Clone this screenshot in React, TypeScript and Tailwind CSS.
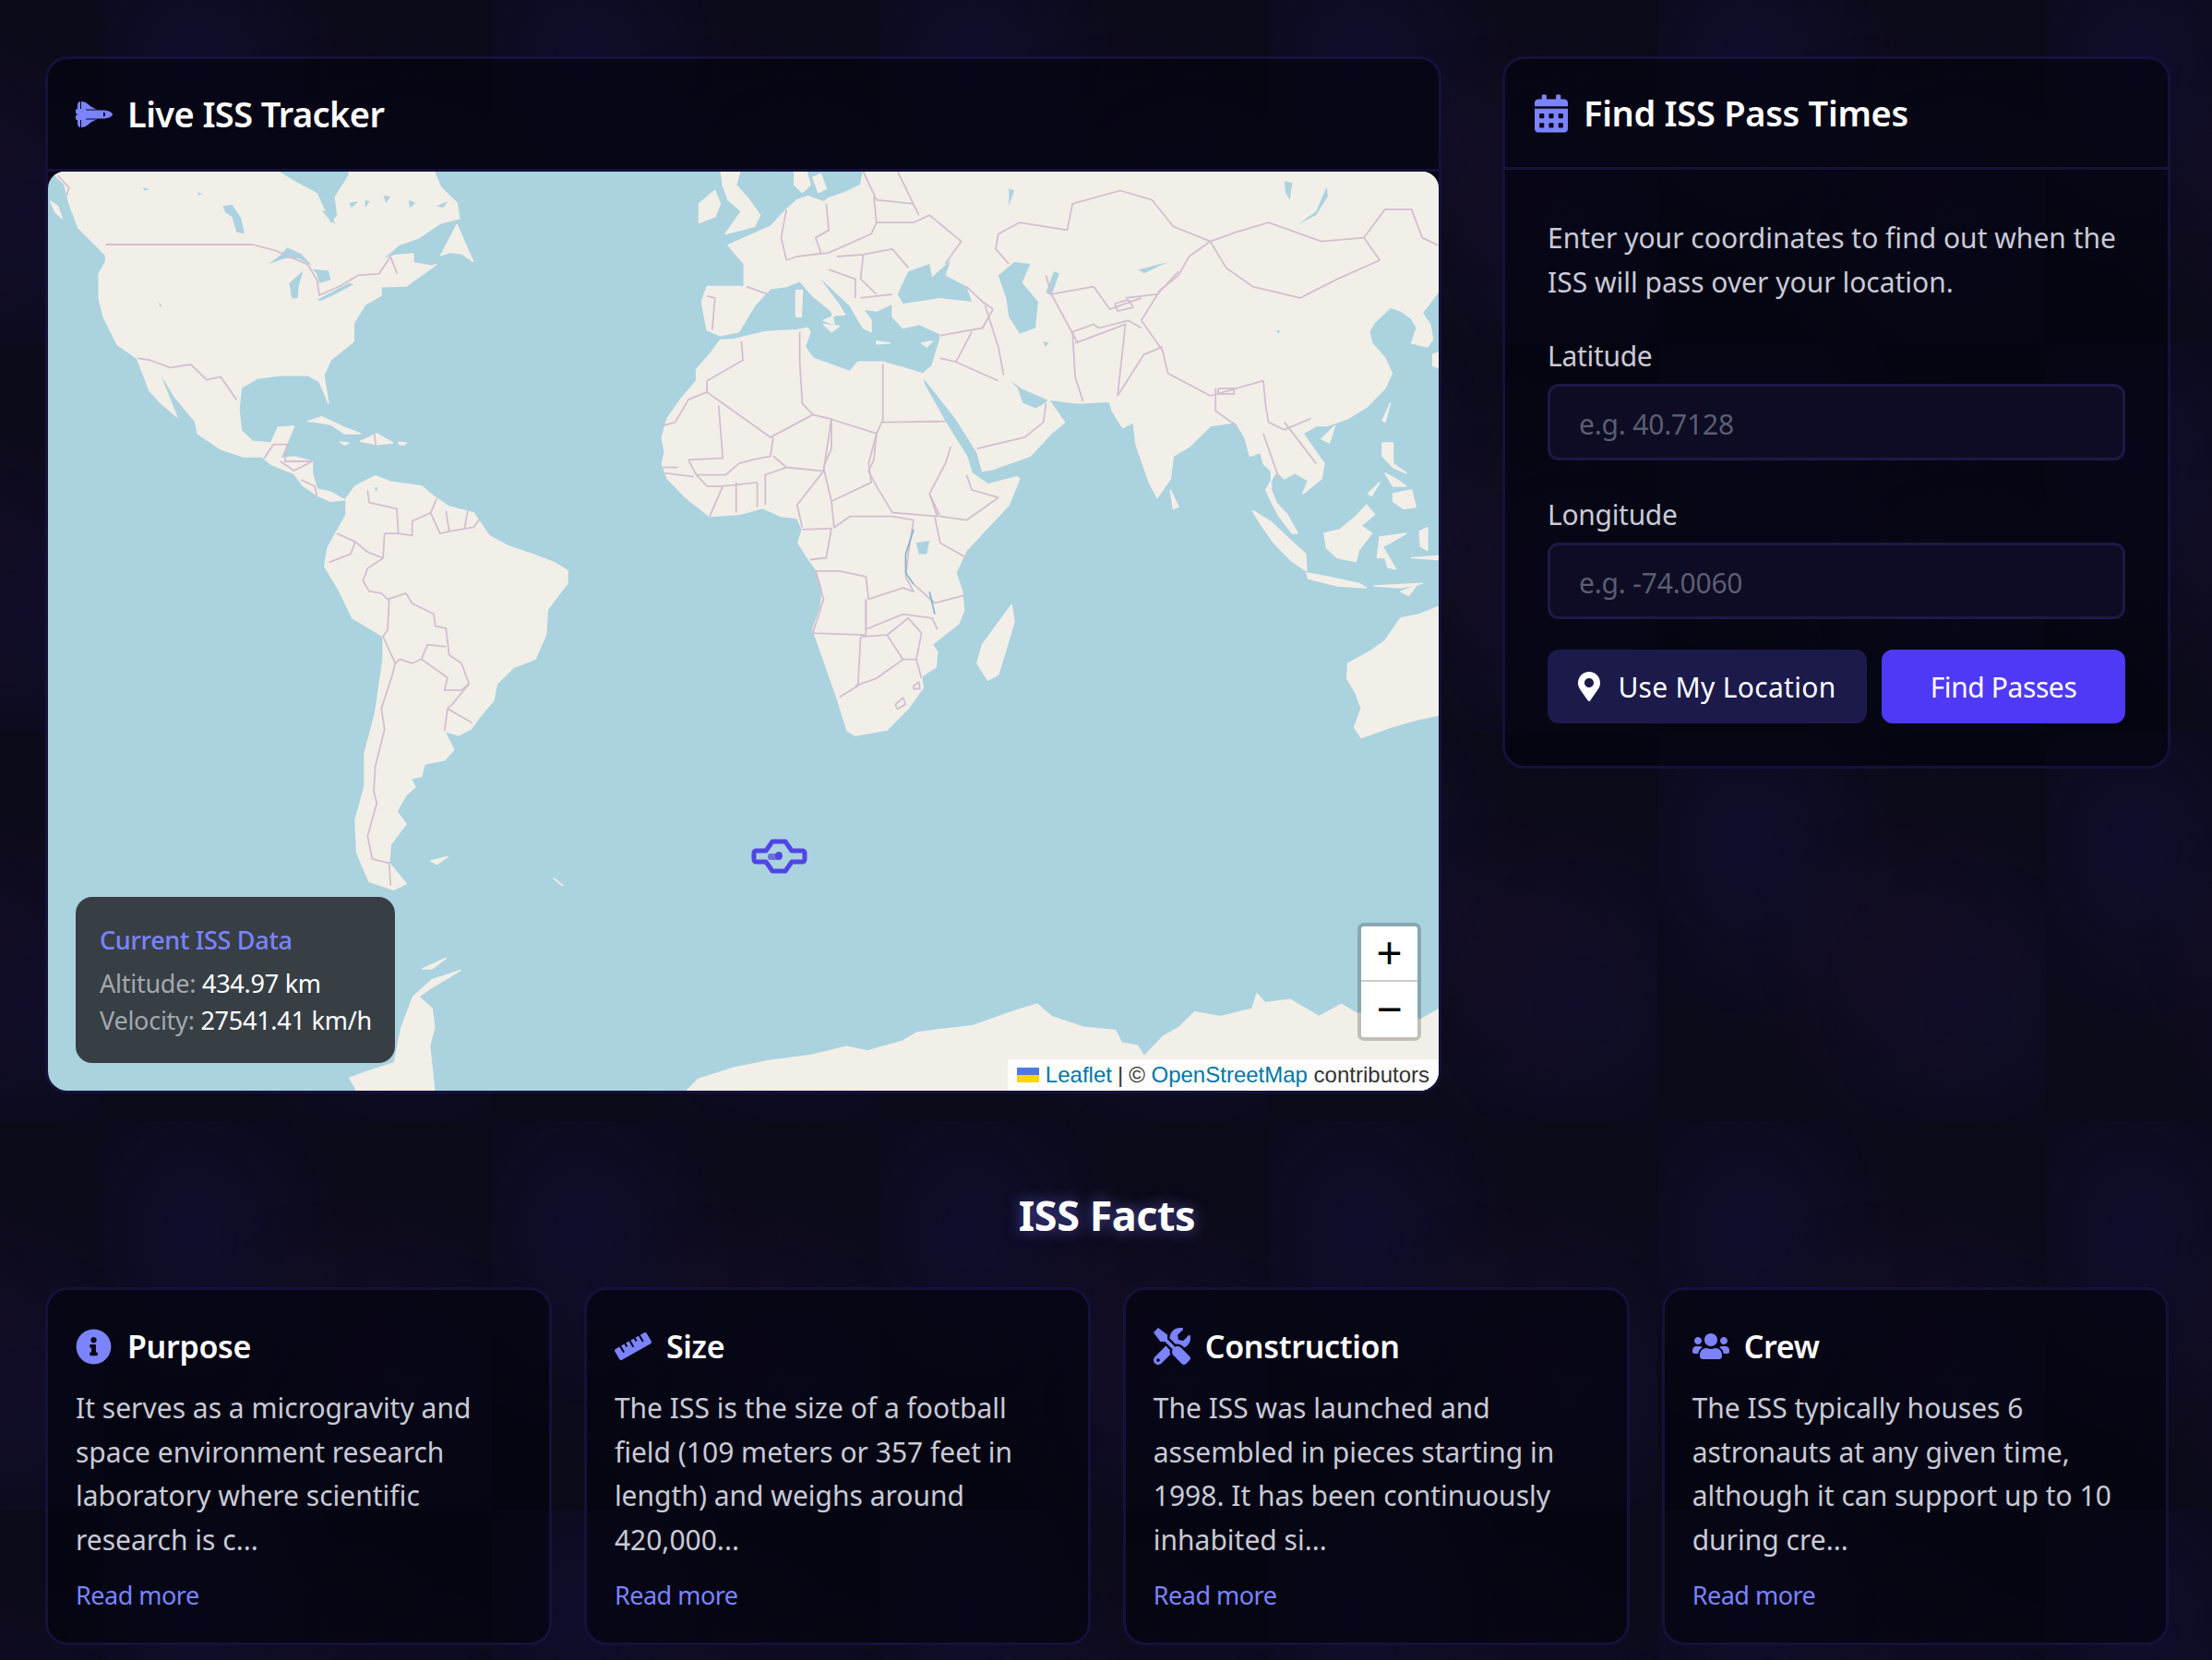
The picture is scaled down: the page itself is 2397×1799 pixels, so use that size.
import React from "react";
import { FaSpaceShuttle, FaCalendarAlt, FaMapMarkerAlt, FaInfoCircle, FaRuler, FaTools, FaUsers } from "react-icons/fa";

type F = (x: number, y: number) => [number, number];
const z7: F = (x, y) => [x / 2.01 - 12, y / 3 - 6];
const z8: F = (x, y) => [x / 1.742 + 628, y / 2.45 - 6];
const z9: F = (x, y) => [x / 3 + 248, y / 2.24 + 314];
const z4: F = (x, y) => [x / 2.9 + 998, y / 3 + 794];
const z10: F = (x, y) => [x / 1.96 + 8, y / 3 + 694];
const mn: F = (x, y) => [x * 1.5287 - 52, y * 1.5287 - 186];
const tx = (s: string, f: F) =>
  s.trim().split(/\s+/).map((p) => {
    const [a, b] = p.split(",").map(Number);
    const [x, y] = f(a, b);
    return `${x.toFixed(1)},${y.toFixed(1)}`;
  }).join(" ");

const land: [string, F][] = [
  // North & Central America
  ["0,0 525,0 525,18 560,50 610,90 625,140 640,190 655,160 650,100 680,30 680,0 860,0 880,70 915,120 920,170 880,185 830,235 790,255 750,305 780,290 820,285 820,315 860,325 870,320 805,390 750,392 750,420 715,450 690,510 690,570 640,630 625,680 635,770 615,700 590,680 530,680 480,690 445,720 440,790 445,860 470,895 510,900 525,850 560,845 545,900 530,950 560,945 600,960 600,1000 610,1050 640,1060 670,1085 640,1090 610,1070 580,1040 560,1000 510,970 490,945 450,945 400,920 350,870 345,830 300,750 262,655 290,760 305,815 270,770 245,730 218,625 175,580 145,490 135,430 135,350 150,310 150,290 130,260 90,200 70,120 60,60 40,30 24,25", z7],
  ["880,290 915,190 935,260 950,310 925,285 900,280", z7],
  ["590,830 620,815 670,850 705,870 670,870 640,840 600,830", z7],
  ["705,895 740,870 775,900 740,905", z7],
  ["660,897 680,900 670,907", z7],
  ["788,898 805,900 800,906 790,905", z7],
  ["30,115 45,130 55,170 40,150", z7],
  // South America
  ["225,90 255,60 320,35 370,50 470,60 510,85 560,110 640,125 690,180 750,205 830,225 900,245 945,265 945,295 880,360 875,420 840,480 770,500 715,540 705,580 660,620 630,650 590,665 545,655 575,700 545,725 480,735 470,765 435,770 450,790 420,810 390,850 420,880 370,930 365,975 420,1025 380,1040 300,1020 260,950 255,870 285,790 285,710 320,610 345,480 345,425 245,380 200,310 155,255 165,210 195,170 225,130", z9],
  ["500,970 555,960 520,978", z9],
  ["900,1012 930,1030 915,1022", z9],
  // Antarctic peninsula
  ["860,515 800,570 772,600 800,640 805,700 795,760 805,905 640,905 625,865 660,845 720,815 735,700 760,600 800,545", z10],
  ["780,510 830,475 800,510", z10],
  // East Antarctica
  ["487,773 495,765 520,757 545,752 575,748 600,742 615,745 640,738 650,732 665,730 690,727 715,718 735,712 735,773", mn],
  ["0,440 100,390 150,345 215,325 260,365 360,400 460,410 480,450 530,460 550,495 610,430 660,400 710,350 790,365 890,340 905,290 930,320 1010,310 1100,365 1170,325 1220,355 1300,350 1420,375 1478,340 1478,610 0,610", z4],
  // Eurasia
  ["445,0 445,15 440,50 410,70 380,85 370,95 340,80 320,90 300,115 270,160 230,185 190,210 220,260 220,320 150,320 140,360 150,435 175,450 210,440 240,370 270,325 300,320 325,305 350,345 385,385 390,420 370,410 395,395 410,395 400,370 355,285 390,330 420,370 430,395 445,430 460,440 460,410 445,380 470,385 500,365 500,400 520,430 550,420 590,445 590,460 575,530 555,555 575,590 620,670 660,760 670,810 690,805 760,770 800,710 825,680 795,620 790,630 770,645 745,630 735,590 710,555 745,590 795,620 850,630 910,625 915,650 935,695 955,680 960,740 985,840 1000,880 1025,830 1030,770 1060,745 1100,690 1148,680 1165,720 1175,770 1195,760 1200,790 1215,810 1215,860 1225,895 1245,925 1265,975 1255,975 1230,930 1215,890 1205,860 1225,810 1240,830 1260,815 1285,835 1275,870 1310,830 1315,790 1290,740 1275,710 1300,690 1320,690 1360,670 1395,640 1430,590 1443,550 1430,510 1405,470 1400,440 1410,415 1440,375 1460,385 1480,405 1490,430 1480,470 1510,480 1520,460 1515,420 1500,390 1530,335 1530,0", z8],
  ["1520,500 1530,495 1530,535 1520,530", z8],
  // Africa
  ["175,462 155,500 130,540 130,570 100,620 75,670 65,720 70,760 65,790 75,830 110,880 155,930 210,925 255,908 290,930 320,935 330,965 322,1000 340,1040 358,1075 368,1120 365,1170 350,1230 365,1290 380,1350 395,1410 415,1500 430,1512 490,1497 530,1440 558,1385 555,1355 582,1330 585,1290 575,1270 625,1215 635,1180 632,1130 620,1080 640,1020 680,960 720,900 740,830 735,825 680,845 660,825 650,815 640,770 600,680 560,580 555,550 520,535 480,520 435,520 420,545 350,510 335,480 345,440 340,430 320,435 260,440 200,460", z8],
  // UK / Ireland / Denmark
  ["175,0 215,0 205,50 230,90 250,130 240,160 185,180 200,150 215,120 190,90 180,50", z8],
  ["135,100 165,65 175,100 165,135 135,150", z8],
  ["315,0 335,0 345,50 330,70 315,50", z8],
  ["350,30 365,20 375,60 360,70", z8],
  // Med islands
  ["318,330 330,330 328,400 318,400", z8],
  ["370,420 400,425 385,440", z8],
  ["470,465 495,470 470,472", z8],
  ["555,470 575,465 565,480", z8],
  // Asia islands
  ["1025,860 1040,905 1030,910", z8],
  ["1180,915 1215,945 1245,985 1280,1030 1282,1075 1255,1050 1220,1000 1195,950", z8],
  ["1282,1080 1320,1090 1380,1108 1395,1120 1340,1115 1285,1095", z8],
  ["1410,1115 1500,1108 1460,1120", z8],
  ["1460,1130 1490,1112 1475,1140", z8],
  ["1315,975 1345,965 1375,930 1395,900 1410,925 1385,955 1405,975 1380,1020 1375,1050 1340,1040 1320,1015", z8],
  ["1420,985 1470,975 1440,1000 1425,1010 1450,1070 1435,1065 1430,1040 1415,1040", z8],
  ["1425,735 1445,735 1445,790 1470,815 1445,800 1425,770", z8],
  ["1445,870 1480,860 1488,905 1465,910 1445,890", z8],
  ["1430,815 1450,830 1470,850 1445,850", z8],
  ["1398,870 1420,840 1405,875", z8],
  ["1495,970 1510,960 1510,1020 1497,1010", z8],
  ["1310,725 1335,690 1325,735", z8],
  ["1425,675 1440,630 1430,680", z8],
  ["1480,1040 1530,1035 1530,1045", z8],
  // Madagascar
  ["670,1270 725,1165 730,1210 700,1350 680,1365 660,1320", z8],
  // Australia
  ["1360,1320 1400,1290 1430,1260 1460,1200 1495,1190 1530,1170 1530,1458 1490,1470 1440,1490 1385,1518 1372,1490 1385,1440 1375,1400 1358,1360", z8],
];

const water: [string, F][] = [
  ["510,340 530,280 570,260 575,295 610,250 600,290 640,320 650,360 590,350 520,365", z8],
  ["715,350 700,290 730,255 760,260 745,310 775,360 770,430 740,445 720,400", z8],
  ["965,275 1020,255 975,285", z8],
  ["1320,55 1300,120 1265,155 1300,130 1322,80", z8],
  ["545,1000 570,995 565,1030 550,1030", z8],
  ["790,335 800,345 815,285 805,280", z8],
  ["505,318 530,290 545,265 575,285 600,325 570,300 540,300", z7],
  ["555,430 550,380 580,340 570,390 568,430", z7],
  ["600,335 635,340 640,370 615,380 610,350", z7],
  ["610,435 660,395 680,380 690,385 645,420 618,438", z7],
  ["405,130 425,125 445,170 452,220 435,215 425,165 410,150", z7],
  ["265,440 272,455 268,458", z7],
  ["735,1045 742,1045 740,1060", z7],
  ["620,145 640,150 650,190 635,170", z7],
  ["715,110 725,115 715,135", z7],
  ["755,95 770,100 760,120", z7],
  ["810,110 825,120 812,135", z7],
  ["680,120 700,115 685,135", z7],
  ["230,70 245,75 235,80", z7],
  ["350,85 360,90 352,95", z7],
  ["870,130 895,115 885,135", z7],
  ["1240,40 1255,45 1250,90 1242,70", z8],
  ["720,60 730,65 720,105", z8],
  ["1225,435 1232,438 1228,445", z8],
  ["785,465 795,470 788,480", z8],
];

const rivers: [string, F][] = [
  ["540,965 525,1030 525,1080 540,1110", z8],
  ["570,1130 580,1190", z8],
];

const borders: [string, F][] = [
  // North America
  ["150,255 470,255 520,275 590,320 610,370 615,420 660,390 700,355 745,350 770,295 785,350", z7],
  ["220,625 245,630 290,655 335,645 370,695 400,685 435,760", z7],
  ["45,30 70,70 65,95", z7],
  ["495,950 515,905 545,905 540,960 600,960", z7],
  ["530,960 560,990 600,960", z7],
  ["575,1020 605,1040 610,1072", z7],
  ["735,870 738,905", z7],
  // South America
  ["295,70 300,100 390,115 395,175 440,180 440,145 500,125 520,90", z9],
  ["500,125 530,175 560,170 550,120", z9],
  ["610,165 620,120", z9],
  ["660,140 640,160 560,170", z9],
  ["350,175 395,175", z9],
  ["350,175 345,235 295,260 280,290 300,315 340,320 360,335 420,320 440,345 510,370 515,400 550,405 560,470 600,490 625,540 570,590 555,600", z9],
  ["195,175 255,195 295,220 345,235", z9],
  ["255,195 240,225 170,245", z9],
  ["365,335 360,410 345,425 385,490 375,520 340,600 350,650 320,740 315,800 325,830 295,910 310,965 365,975 370,1030", z9],
  ["385,490 400,480 440,490 470,480 555,525 545,555 600,555 625,540", z9],
  ["470,480 490,445 550,450", z9],
  ["555,600 635,635", z9],
  ["555,600 545,655", z9],
  // Africa
  ["215,465 218,515 150,570 150,600 270,720 350,660 380,670 470,710 480,680 600,678", z8],
  ["325,440 325,520 330,630 350,660", z8],
  ["482,525 482,680", z8],
  ["150,600 115,620 90,680 65,690", z8],
  ["172,635 180,775 115,780", z8],
  ["115,780 130,820 185,820 210,790 235,780 270,770 275,720", z8],
  ["275,770 300,800 370,810 385,670", z8],
  ["385,670 385,750 370,800 385,890 460,840 455,790 470,710", z8],
  ["470,710 465,780 455,810 470,850 500,920 585,930 570,870 600,790 610,745", z8],
  ["570,870 590,930 640,940 700,880 650,860 640,820", z8],
  ["300,800 260,820 260,900", z8],
  ["370,810 320,900 330,960", z8],
  ["205,840 205,920", z8],
  ["245,840 245,905", z8],
  ["180,850 155,930", z8],
  ["130,820 150,850 180,850 245,840", z8],
  ["66,800 95,800", z8],
  ["70,815 125,825", z8],
  ["385,890 390,960 420,930 500,930 540,940 530,1030 525,1090 540,1130 520,1120 455,1150 450,1090 400,1075 355,1075", z8],
  ["330,965 385,962 375,1040 345,1045", z8],
  ["580,930 590,1000 640,1040", z8],
  ["540,1110 580,1160 635,1140", z8],
  ["355,1075 370,1150 350,1240 450,1245 450,1150", z8],
  ["450,1150 450,1230 520,1190 575,1200 585,1230", z8],
  ["440,1250 435,1380 400,1410", z8],
  ["440,1250 490,1245 520,1310 545,1310 555,1360", z8],
  ["430,1380 470,1360 520,1310", z8],
  ["490,1245 530,1200 555,1240 545,1310", z8],
  // Middle East
  ["590,450 670,430 690,380", z8],
  ["675,370 700,480 710,555", z8],
  ["840,440 845,560 860,625", z8],
  ["590,510 620,520 700,570", z8],
  ["660,750 750,720 785,680 790,630", z8],
  ["620,520 650,440", z8],
  ["845,470 940,420 925,610", z8],
  ["925,610 975,500 1010,480", z8],
  ["970,410 1010,490 1020,550 1100,610 1200,570 1205,640 1210,680", z8],
  ["1110,590 1110,650 1150,690", z8],
  ["1210,680 1240,700 1290,670", z8],
  ["1200,710 1230,830", z8],
  ["1240,680 1300,790", z8],
  ["840,440 880,420 890,430 945,410 970,430", z8],
  // Russia, Mongolia
  ["700,180 740,150 830,170 840,100 930,65 990,90 1030,160 1100,200", z8],
  ["1100,200 1150,175 1210,150 1310,200 1390,190 1420,250 1340,300 1270,350 1180,320 1130,270 1100,200", z8],
  ["1390,190 1430,115 1480,115 1500,190 1530,210", z8],
  ["700,180 695,220 720,260", z8],
  ["790,290 800,340 880,320 910,380 970,350", z8],
  ["1100,200 1060,240 1040,290 1005,330 970,410", z8],
  ["1040,280 1000,340 940,350", z8],
  ["800,340 850,470", z8],
  // Europe
  ["300,250 320,240 380,230 460,180 470,150 540,150 570,130 630,200 600,260", z8],
  ["375,100 380,170 355,190 365,230", z8],
  ["465,80 470,150", z8],
  ["510,15 550,130", z8],
  ["445,15 470,90 540,100", z8],
  ["300,115 290,190 300,250", z8],
  ["445,235 500,220 530,270", z8],
  ["395,240 445,235 440,300 470,340", z8],
  ["380,275 430,300 430,350", z8],
  ["440,350 500,340", z8],
  ["150,345 165,350 160,435", z8],
  ["225,320 265,340", z8],
  ["640,320 670,360 690,380", z8],
];

const rings: [string, F][] = [
  ["505,1430 520,1412 525,1428 510,1442 505,1430", z8],
  ["540,1380 550,1370 552,1388 540,1388 540,1380", z8],
  ["1115,590 1145,590 1145,605 1115,605 1115,590", z8],
  ["920,365 945,355 955,375 925,385 920,365", z8],
];

function WorldMap() {
  return (
    <svg className="absolute inset-0 h-full w-full" viewBox="0 0 1507 996" preserveAspectRatio="none">
      <rect width="1507" height="996" fill="#abd2df" />
      <g className="blur-[0.6px]">
        <g fill="#f2efe9" stroke="#f2efe9" strokeWidth="1.5" strokeLinejoin="round">
          {land.map(([s, f], i) => <polygon key={i} points={tx(s, f)} />)}
        </g>
        <g fill="#abd2df">
          {water.map(([s, f], i) => <polygon key={i} points={tx(s, f)} />)}
        </g>
        <g fill="none" stroke="#d3bfcf" strokeWidth="1.8" strokeLinejoin="round">
          {borders.map(([s, f], i) => <polyline key={i} points={tx(s, f)} />)}
          {rings.map(([s, f], i) => <polyline key={i} points={tx(s, f)} />)}
        </g>
        <g fill="none" stroke="#7fb2cc" strokeWidth="1.6">
          {rivers.map(([s, f], i) => <polyline key={i} points={tx(s, f)} />)}
        </g>
      </g>
      {/* ISS marker */}
      <g transform="translate(763,724)">
        <path d="M22,2 L36,2 L43,12 L54,12 Q57,12 57,15 L57,21 Q57,24 54,24 L43,24 L36,34 L22,34 L15,24 L5,24 Q2,24 2,21 L2,15 Q2,12 5,12 L15,12 Z" fill="none" stroke="#4f46e5" strokeWidth="5" strokeLinejoin="round" />
        <rect x="17" y="15" width="12" height="7" rx="3" fill="#6d72dd" />
        <ellipse cx="29" cy="17.5" rx="4" ry="4.5" fill="#4f46e5" />
      </g>
    </svg>
  );
}

function FactCard({ icon, title, lines }: { icon: React.ReactNode; title: string; lines: string[] }) {
  return (
    <div className="h-[388px] rounded-[24px] border-[3px] border-[#14123a] bg-[rgba(4,4,16,0.72)] px-[30px] pt-[28px]">
      <div className="flex h-[66px] items-center gap-[12px]">
        <span className="flex w-[44px] shrink-0 justify-start text-[#7b83ff]">{icon}</span>
        <h3 className="text-[34px] font-semibold tracking-[-0.3px] text-white">{title}</h3>
      </div>
      <div className="mt-[10px] text-[#c9cad6]">
        {lines.map((l) => (
          <p key={l} className="h-[47.6px] whitespace-nowrap text-[30px] leading-[47.6px]">{l}</p>
        ))}
      </div>
      <a className="mt-[17px] block text-[27px] leading-[40px] tracking-[-0.5px] text-[#7b83ff]">Read more</a>
    </div>
  );
}

export default function App() {
  return (
    <div className="min-h-[1799px] bg-[#0a0a18] bg-[radial-gradient(ellipse_170px_220px_at_95px_120px,rgba(20,20,90,0.3),transparent),radial-gradient(ellipse_200px_200px_at_228px_218px,rgba(50,15,50,0.14),transparent),radial-gradient(ellipse_210px_210px_at_335px_294px,rgba(40,25,110,0.2),transparent)] pl-[49px] pr-[47px] pt-[61px] font-['Noto_Sans',sans-serif] [background-position:112px_-48px] [background-size:421px_421px]">
      <div className="flex items-start gap-[66px]">
        {/* Left card */}
        <section className="h-[1124px] w-[1513px] shrink-0 overflow-hidden rounded-[24px] border-[3px] border-[#14123a] bg-[rgba(4,4,16,0.72)]">
          <header className="flex h-[122px] items-center gap-[16px] border-b-[3px] border-[#14123a] px-[30px]">
            <FaSpaceShuttle className="h-[42px] w-[40px] text-[#7b83ff]" />
            <h2 className="text-[38px] font-semibold tracking-[-0.6px] text-white">Live ISS Tracker</h2>
          </header>
          <div className="relative h-[996px] overflow-hidden rounded-[18px]">
            <WorldMap />
            <div className="absolute bottom-[30px] left-[30px] h-[180px] w-[346px] whitespace-nowrap rounded-[18px] bg-[#373f45] pl-[26px] pt-[27px]">
              <div className="text-[27px] font-medium leading-[40px] tracking-[-0.3px] text-[#7b83ff]">Current ISS Data</div>
              <div className="mt-[7px] text-[27px] leading-[40px] tracking-[-0.25px] text-[#a3a8ad]">Altitude: <span className="text-white">434.97 km</span></div>
              <div className="text-[27px] leading-[40px] tracking-[-0.25px] text-[#a3a8ad]">Velocity: <span className="text-white">27541.41 km/h</span></div>
            </div>
            <div className="absolute bottom-[54px] right-[19px] w-[69px] overflow-hidden rounded-[7px] border-[4px] border-[rgba(0,0,0,0.2)] bg-clip-padding font-['Liberation_Sans',sans-serif]">
              <div className="flex h-[60px] items-center justify-center border-b-2 border-[#ccc] bg-white text-[48px] leading-none text-black">+</div>
              <div className="flex h-[60px] items-center justify-center bg-white text-[48px] leading-none text-black">−</div>
            </div>
            <div className="absolute bottom-0 right-0 flex h-[34px] items-center whitespace-nowrap bg-[rgba(255,255,255,0.85)] px-[10px] font-['Liberation_Sans',sans-serif] text-[24px] text-[#333]">
              <svg className="mr-[7px] h-[16px] w-[24px]" viewBox="0 0 12 8"><rect width="12" height="4" fill="#4c7be0" /><rect y="4" width="12" height="4" fill="#ffd500" /></svg>
              <a className="text-[#0078a8]">Leaflet</a>
              <span className="mx-[6px]">|</span>
              <span>©&nbsp;</span>
              <a className="text-[#0078a8]">OpenStreetMap</a>
              <span>&nbsp;contributors</span>
            </div>
          </div>
        </section>

        {/* Right card */}
        <section className="h-[772px] w-[724px] shrink-0 overflow-hidden rounded-[24px] border-[3px] border-[#14123a] bg-[rgba(4,4,16,0.72)]">
          <header className="flex h-[120px] items-center gap-[17px] border-b-[3px] border-[#14123a] px-[32px]">
            <FaCalendarAlt className="h-[42px] w-[36px] text-[#7b83ff]" />
            <h2 className="text-[38px] font-semibold tracking-[-0.3px] text-white">Find ISS Pass Times</h2>
          </header>
          <div className="px-[46px] pt-[50px]">
            <p className="text-[30px] leading-[47.6px] text-[#c9cad6]">Enter your coordinates to find out when the ISS will pass over your location.</p>
            <label className="mt-[37px] block text-[30px] leading-[40px] tracking-[-0.3px] text-[#c9cad6]">Latitude</label>
            <input readOnly placeholder="e.g. 40.7128" className="mt-[10px] block h-[83px] w-full rounded-[12px] border-[3px] border-[#1b1944] bg-[#0d0c24] px-[31px] pt-[3px] text-[30px] tracking-[-0.2px] placeholder:text-[#5b5d72]" />
            <label className="mt-[39px] block text-[30px] leading-[40px] tracking-[-0.3px] text-[#c9cad6]">Longitude</label>
            <input readOnly placeholder="e.g. -74.0060" className="mt-[10px] block h-[83px] w-full rounded-[12px] border-[3px] border-[#1b1944] bg-[#0d0c24] px-[31px] pt-[3px] text-[30px] tracking-[-0.2px] placeholder:text-[#5b5d72]" />
            <div className="mt-[33px] flex gap-[16px]">
              <button className="flex h-[80px] w-[346px] items-center justify-center gap-[19px] rounded-[12px] bg-[#1b1a4b] text-[30px] tracking-[0.3px] text-white">
                <FaMapMarkerAlt className="h-[32px] w-[24px]" />
                Use My Location
              </button>
              <button className="flex h-[80px] flex-1 items-center justify-center rounded-[12px] bg-[#4f39f6] text-[30px] tracking-[-0.4px] text-white">Find Passes</button>
            </div>
          </div>
        </section>
      </div>

      <h2 className="mt-[102px] text-center text-[45px] font-bold leading-[60px] tracking-[-0.5px] text-white [text-shadow:0_0_16px_rgba(120,120,255,0.6)]">ISS Facts</h2>

      <div className="mt-[48px] grid grid-cols-4 gap-[34.5px]">
        <FactCard icon={<FaInfoCircle className="h-[39px] w-[39px]" />} title="Purpose" lines={["It serves as a microgravity and", "space environment research", "laboratory where scientific", "research is c..."]} />
        <FactCard icon={<FaRuler className="h-[40px] w-[40px]" />} title="Size" lines={["The ISS is the size of a football", "field (109 meters or 357 feet in", "length) and weighs around", "420,000..."]} />
        <FactCard icon={<FaTools className="h-[40px] w-[40px]" />} title="Construction" lines={["The ISS was launched and", "assembled in pieces starting in", "1998. It has been continuously", "inhabited si..."]} />
        <FactCard icon={<FaUsers className="h-[32px] w-[40px]" />} title="Crew" lines={["The ISS typically houses 6", "astronauts at any given time,", "although it can support up to 10", "during cre..."]} />
      </div>
    </div>
  );
}
